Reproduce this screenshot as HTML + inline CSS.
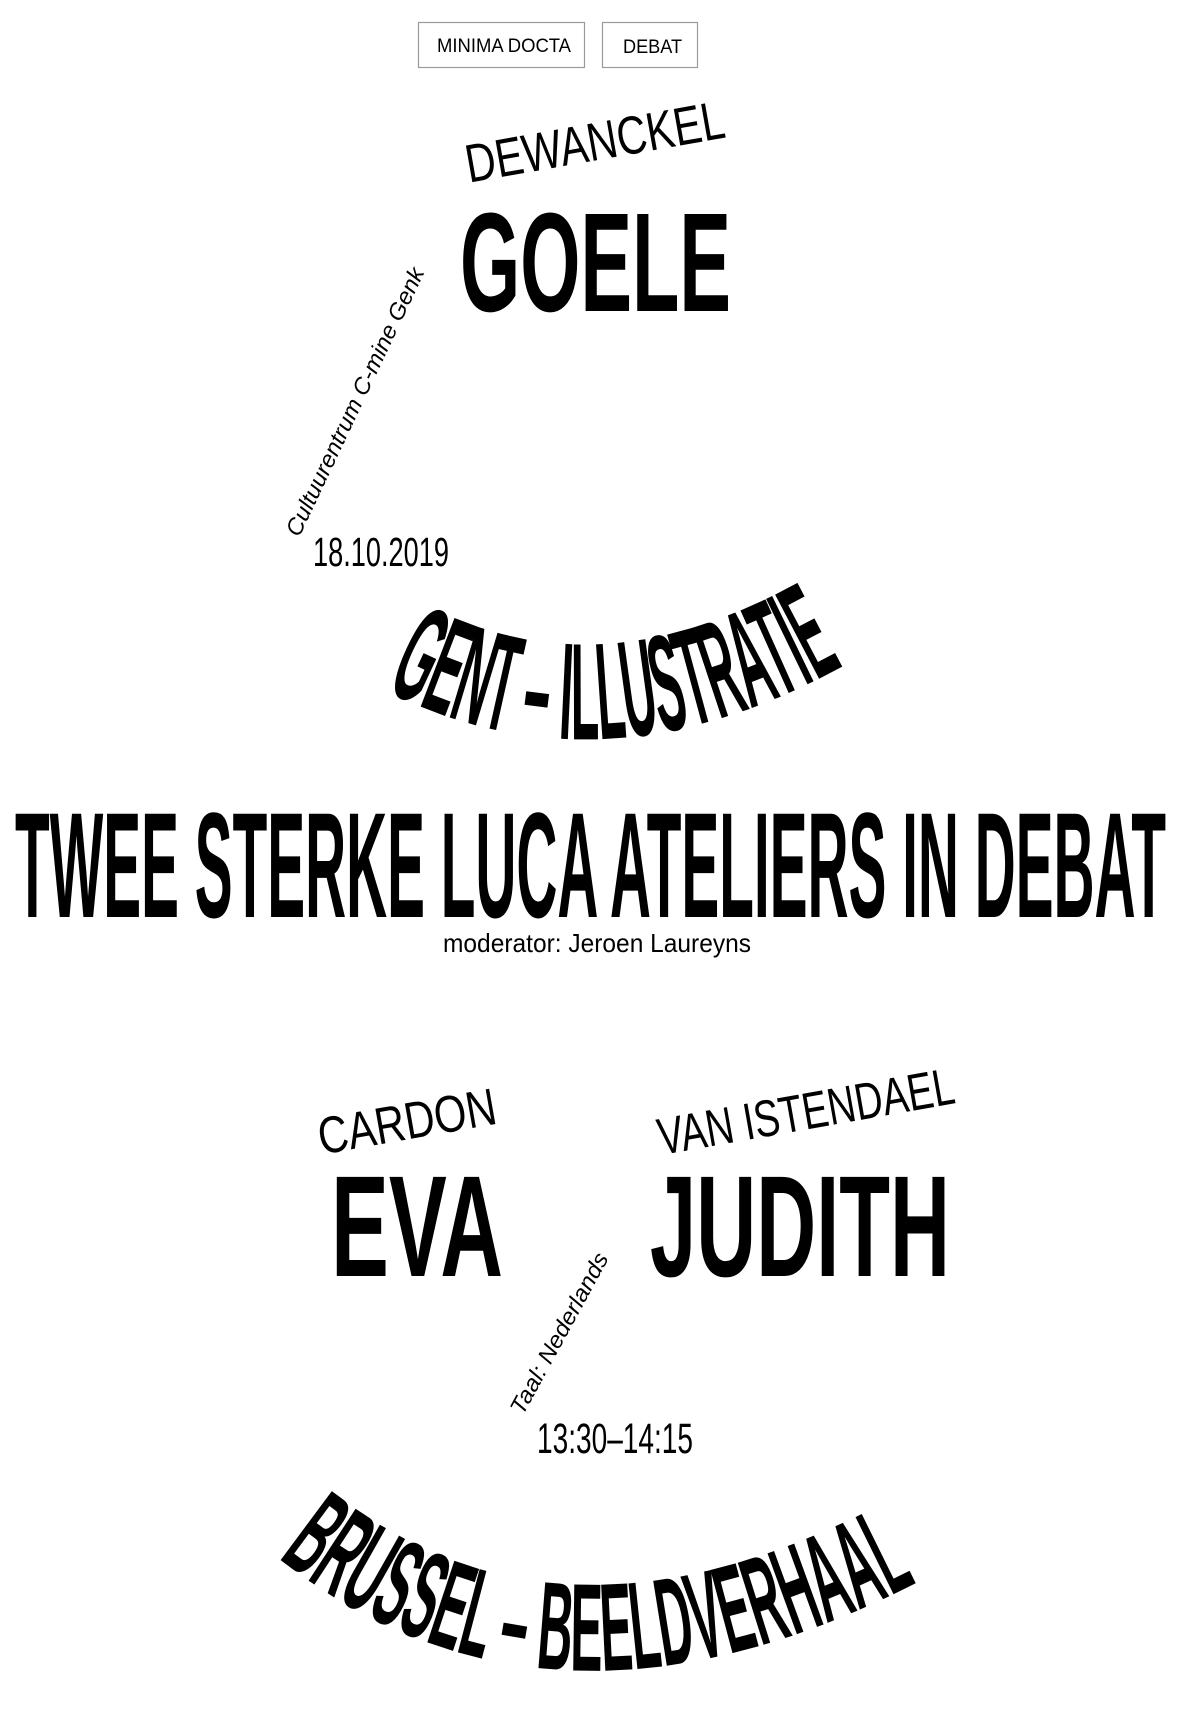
<!DOCTYPE html>
<html><head><meta charset="utf-8"><style>
html,body{margin:0;padding:0;background:#fff;}
svg{display:block;}
text{font-family:"Liberation Sans",sans-serif;fill:#000;}
</style></head><body>
<svg width="1186" height="1724" viewBox="0 0 1186 1724" xmlns="http://www.w3.org/2000/svg">
<defs>
<path id="arc1" d="M385,690 Q600,800 845,665"/>
<path id="arc2" d="M278,1558 Q560,1780 950,1565"/>
</defs>
<rect x="418.5" y="22.5" width="166" height="45" fill="#fff" stroke="#9a9a9a" stroke-width="1.2"/>
<rect x="602.5" y="22.5" width="95" height="45" fill="#fff" stroke="#9a9a9a" stroke-width="1.2"/>
<text x="437" y="52" font-size="19" textLength="134" lengthAdjust="spacingAndGlyphs">MINIMA DOCTA</text>
<text x="623" y="53" font-size="19" textLength="59" lengthAdjust="spacingAndGlyphs">DEBAT</text>

<text transform="translate(598,160) rotate(-10)" text-anchor="middle" font-size="54" textLength="262" lengthAdjust="spacingAndGlyphs">DEWANCKEL</text>
<text x="460" y="311" font-size="141" font-weight="bold" textLength="271" lengthAdjust="spacingAndGlyphs">GOELE</text>
<text transform="translate(362,405) rotate(-64.7)" text-anchor="middle" font-size="23" font-style="italic" textLength="294" lengthAdjust="spacingAndGlyphs">Cultuurentrum C-mine Genk</text>
<text x="313" y="566" font-size="41" textLength="136" lengthAdjust="spacingAndGlyphs">18.10.2019</text>

<text font-size="138" font-weight="bold"><textPath href="#arc1" textLength="480" lengthAdjust="spacingAndGlyphs">GENT – ILLUSTRATIE</textPath></text>

<text x="15" y="917" font-size="150" font-weight="bold" textLength="1151" lengthAdjust="spacingAndGlyphs">TWEE STERKE LUCA ATELIERS IN DEBAT</text>
<text x="443" y="952" font-size="26" textLength="308" lengthAdjust="spacingAndGlyphs">moderator: Jeroen Laureyns</text>

<text transform="translate(410,1139) rotate(-10)" text-anchor="middle" font-size="52" textLength="180" lengthAdjust="spacingAndGlyphs">CARDON</text>
<text transform="translate(809,1129) rotate(-10)" text-anchor="middle" font-size="52" textLength="300" lengthAdjust="spacingAndGlyphs">VAN ISTENDAEL</text>

<text x="331" y="1276" font-size="144" font-weight="bold" textLength="172" lengthAdjust="spacingAndGlyphs">EVA</text>
<text x="650" y="1276" font-size="144" font-weight="bold" textLength="300" lengthAdjust="spacingAndGlyphs">JUDITH</text>

<text transform="translate(566,1337) rotate(-61.4)" text-anchor="middle" font-size="23" font-style="italic" textLength="180" lengthAdjust="spacingAndGlyphs">Taal: Nederlands</text>
<text x="537" y="1453" font-size="43" textLength="156" lengthAdjust="spacingAndGlyphs">13:30–14:15</text>

<text font-size="125" font-weight="bold"><textPath href="#arc2" textLength="680" lengthAdjust="spacingAndGlyphs">BRUSSEL – BEELDVERHAAL</textPath></text>
</svg>
</body></html>
